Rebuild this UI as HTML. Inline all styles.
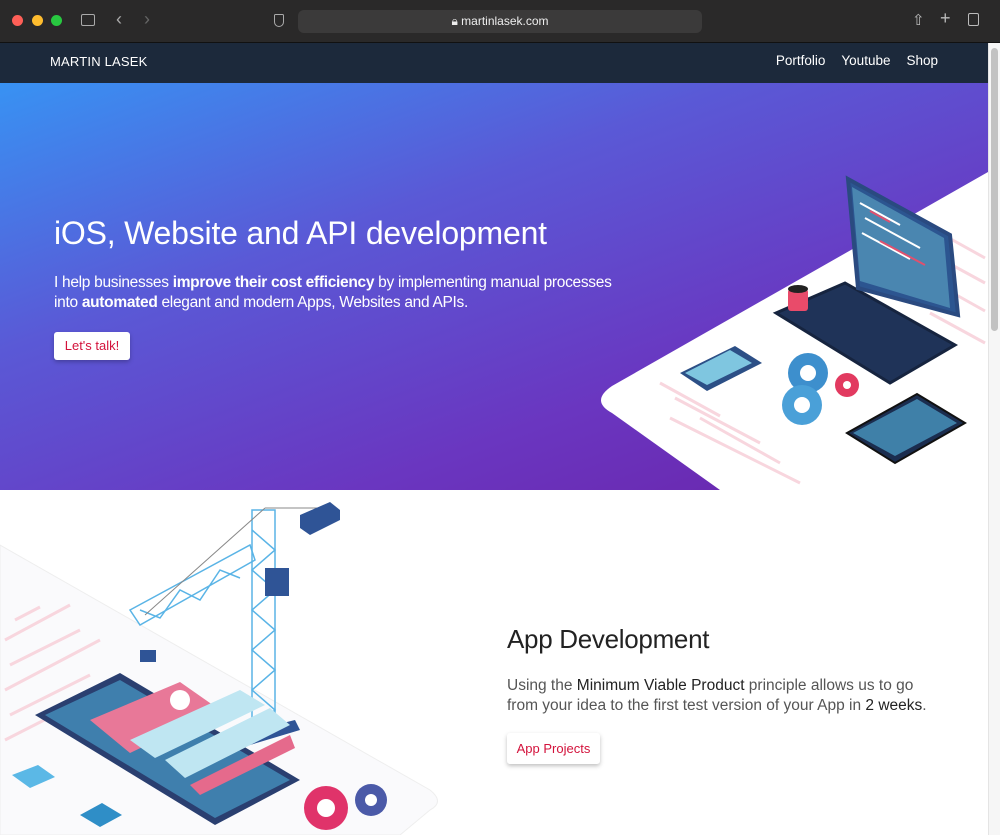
<!DOCTYPE html>
<html><head><meta charset="utf-8"><style>
*{margin:0;padding:0;box-sizing:border-box}
body{width:1000px;height:835px;overflow:hidden;background:#fff;font-family:"Liberation Sans",sans-serif;position:relative}
.chrome{position:absolute;left:0;top:0;width:1000px;height:43px;background:#2a2929;border-bottom:1px solid #111}
.url{position:absolute;left:298px;top:10px;width:404px;height:23px;background:#3b3a3a;border-radius:6px;color:#eee;font-size:12px;text-align:center;line-height:23px}
.nav{position:absolute;left:0;top:43px;width:988px;height:40px;background:#1c293b;color:#fff}
.nav .logo{position:absolute;left:50px;top:11px;font-size:13px;letter-spacing:.2px}
.nav .links{position:absolute;right:50px;top:10px;font-size:13.5px}
.nav .links span{margin-left:16px}
.hero{position:absolute;left:0;top:83px;width:988px;height:407px;background:linear-gradient(160deg,#3892f3 0%,#5a59d6 35%,#6a36c0 70%,#6a22a8 100%);overflow:hidden}
h1{position:absolute;left:54px;top:132px;font-weight:normal;font-size:32px;color:#fff;letter-spacing:-.2px}
.hp{position:absolute;left:54px;top:190px;font-size:15.5px;line-height:19.5px;color:#fff;width:620px;letter-spacing:-.3px}
.btn{position:absolute;background:#fff;color:#d3123b;font-size:13px;border-radius:3px;text-align:center;box-shadow:0 2px 4px rgba(0,0,0,.25)}
.scroll{position:absolute;left:988px;top:43px;width:12px;height:792px;background:#f6f6f6;border-left:1px solid #e4e4e4}
.thumb{position:absolute;left:991px;top:48px;width:7px;height:283px;background:#c2c2c2;border-radius:4px}
h2{position:absolute;left:507px;top:624px;font-weight:normal;font-size:26px;color:#222;letter-spacing:-.3px}
.p2{position:absolute;left:507px;top:676px;font-size:15.5px;line-height:19.5px;color:#555;width:440px}
.p2 b{color:#222;font-weight:normal}
</style></head><body>
<div class="chrome">
<span style="position:absolute;left:12px;top:15px;width:11px;height:11px;border-radius:50%;background:#fe5f57"></span>
<span style="position:absolute;left:32px;top:15px;width:11px;height:11px;border-radius:50%;background:#febc2e"></span>
<span style="position:absolute;left:51px;top:15px;width:11px;height:11px;border-radius:50%;background:#28c840"></span>
<span style="position:absolute;left:81px;top:14px;width:14px;height:12px;border:1.5px solid #aaa;border-radius:2px"></span>
<span style="position:absolute;left:116px;top:9px;color:#aaa;font-size:18px">‹</span>
<span style="position:absolute;left:144px;top:9px;color:#666;font-size:18px">›</span>
<span style="position:absolute;left:274px;top:14px;width:10px;height:13px;border:1.5px solid #aaa;border-radius:2px 2px 6px 6px"></span>
<div class="url">🔒︎ martinlasek.com</div>
<span style="position:absolute;left:912px;top:11px;color:#bbb;font-size:15px">⇧</span>
<span style="position:absolute;left:940px;top:8px;color:#bbb;font-size:18px">+</span>
<span style="position:absolute;left:968px;top:13px;width:11px;height:13px;border:1.5px solid #bbb;border-radius:2px"></span>
</div>
<div class="nav"><div class="logo">MARTIN LASEK</div><div class="links"><span>Portfolio</span><span>Youtube</span><span>Shop</span></div></div>
<div class="hero">
<svg width="988" height="407" style="position:absolute;left:0;top:0">
<path d="M988 89 L612 303 Q590 318 612 330 L720 407 L988 407Z" fill="#fff"/>
<g stroke="#f8d6de" stroke-width="3">
<line x1="940" y1="150" x2="985" y2="175"/><line x1="930" y1="170" x2="985" y2="200"/><line x1="935" y1="200" x2="985" y2="228"/><line x1="930" y1="230" x2="985" y2="260"/>
<line x1="660" y1="300" x2="720" y2="333"/><line x1="675" y1="315" x2="760" y2="360"/><line x1="670" y1="335" x2="800" y2="400"/><line x1="700" y1="335" x2="780" y2="380"/>
</g>
<polygon points="776,230 845,200 955,262 890,300" fill="#1f3358" stroke="#16243f" stroke-width="3"/>
<polygon points="848,96 950,152 958,232 858,205" fill="#2c5590" stroke="#2a4a80" stroke-width="4"/>
<polygon points="852,104 944,155 950,225 860,198" fill="#4a86b0"/>
<g stroke="#fff" stroke-width="2"><line x1="860" y1="120" x2="900" y2="142"/><line x1="865" y1="135" x2="920" y2="165"/><line x1="862" y1="150" x2="910" y2="176"/></g>
<g stroke="#e0506e" stroke-width="2"><line x1="870" y1="128" x2="890" y2="139"/><line x1="880" y1="158" x2="925" y2="182"/></g>
<rect x="788" y="206" width="20" height="22" rx="3" fill="#e94b6a"/><ellipse cx="798" cy="206" rx="10" ry="4" fill="#222"/>
<polygon points="680,290 735,263 762,280 707,308" fill="#2c4f86"/>
<polygon points="685,290 730,267 752,280 707,302" fill="#7fc6e0"/>
<circle cx="808" cy="290" r="20" fill="#3d8fcd"/><circle cx="808" cy="290" r="8" fill="#fff"/>
<circle cx="802" cy="322" r="20" fill="#4aa0d8"/><circle cx="802" cy="322" r="8" fill="#fff"/>
<circle cx="847" cy="302" r="12" fill="#e23a60"/><circle cx="847" cy="302" r="4" fill="#fff"/>
<polygon points="847,350 917,311 965,340 895,380" fill="#1b2d4f" stroke="#111" stroke-width="2"/>
<polygon points="853,350 917,316 957,340 895,373" fill="#3f80a8"/>
</svg>
<h1>iOS, Website and API development</h1>
<div class="hp">I help businesses <b>improve their cost efficiency</b> by implementing manual processes<br>into <b>automated</b> elegant and modern Apps, Websites and APIs.</div>
<div class="btn" style="left:54px;top:249px;width:76px;height:28px;line-height:28px">Let's talk!</div>
</div>
<svg width="460" height="345" style="position:absolute;left:0;top:490px">
<path d="M0 55 L430 300 Q445 312 430 320 L400 345 L0 345Z" fill="#fafafc" stroke="#eee"/>
<g stroke="#f8d6de" stroke-width="3">
<line x1="15" y1="130" x2="40" y2="117"/><line x1="5" y1="150" x2="70" y2="115"/><line x1="10" y1="175" x2="80" y2="140"/><line x1="5" y1="200" x2="100" y2="150"/><line x1="10" y1="225" x2="90" y2="185"/><line x1="5" y1="250" x2="60" y2="222"/>
</g>
<g stroke="#5ab4e6" stroke-width="1.5" fill="none">
<polygon points="252,20 275,20 275,240 252,240"/><path d="M252 40 L275 60 L252 80 L275 100 L252 120 L275 140 L252 160 L275 180 L252 200 L275 220 L252 240"/>
<polygon points="130,120 250,55 255,70 140,135"/><path d="M140 120 L160 128 L180 100 L200 110 L220 80 L240 88"/>
<line x1="265" y1="18" x2="330" y2="18" stroke="#888" stroke-width="1"/><line x1="265" y1="18" x2="145" y2="125" stroke="#888" stroke-width="1"/>
</g>
<polygon points="300,25 330,12 340,20 340,30 310,45 300,38" fill="#2f5496"/>
<rect x="265" y="78" width="24" height="28" fill="#2f5496"/>
<polygon points="235,245 295,230 300,240 240,258" fill="#2f5496"/>
<rect x="140" y="160" width="16" height="12" fill="#2f5496"/>
<polygon points="35,225 120,183 300,290 215,335" fill="#2a3f70"/>
<polygon points="45,225 120,190 290,290 215,328" fill="#3f7fad"/>
<polygon points="90,230 180,192 220,220 130,263" fill="#e87898"/>
<circle cx="180" cy="210" r="10" fill="#fff"/>
<polygon points="130,250 240,200 265,215 155,268" fill="#bfe6f2"/>
<polygon points="165,270 270,218 290,235 185,288" fill="#bfe6f2"/>
<polygon points="190,295 290,245 295,258 200,305" fill="#e56a8c"/>
<polygon points="12,285 38,275 55,287 30,298" fill="#5bb8e6"/>
<polygon points="80,325 102,313 122,325 100,337" fill="#2f8ec7"/>
<circle cx="326" cy="318" r="22" fill="#e0336a"/><circle cx="326" cy="318" r="9" fill="#fff"/>
<circle cx="371" cy="310" r="16" fill="#4b5aa8"/><circle cx="371" cy="310" r="6" fill="#fff"/>
</svg>
<h2>App Development</h2>
<div class="p2">Using the <b>Minimum Viable Product</b> principle allows us to go from your idea to the first test version of your App in <b>2 weeks</b>.</div>
<div class="btn" style="left:507px;top:733px;width:93px;height:31px;line-height:31px">App Projects</div>
<div class="scroll"></div><div class="thumb"></div>
</body></html>
